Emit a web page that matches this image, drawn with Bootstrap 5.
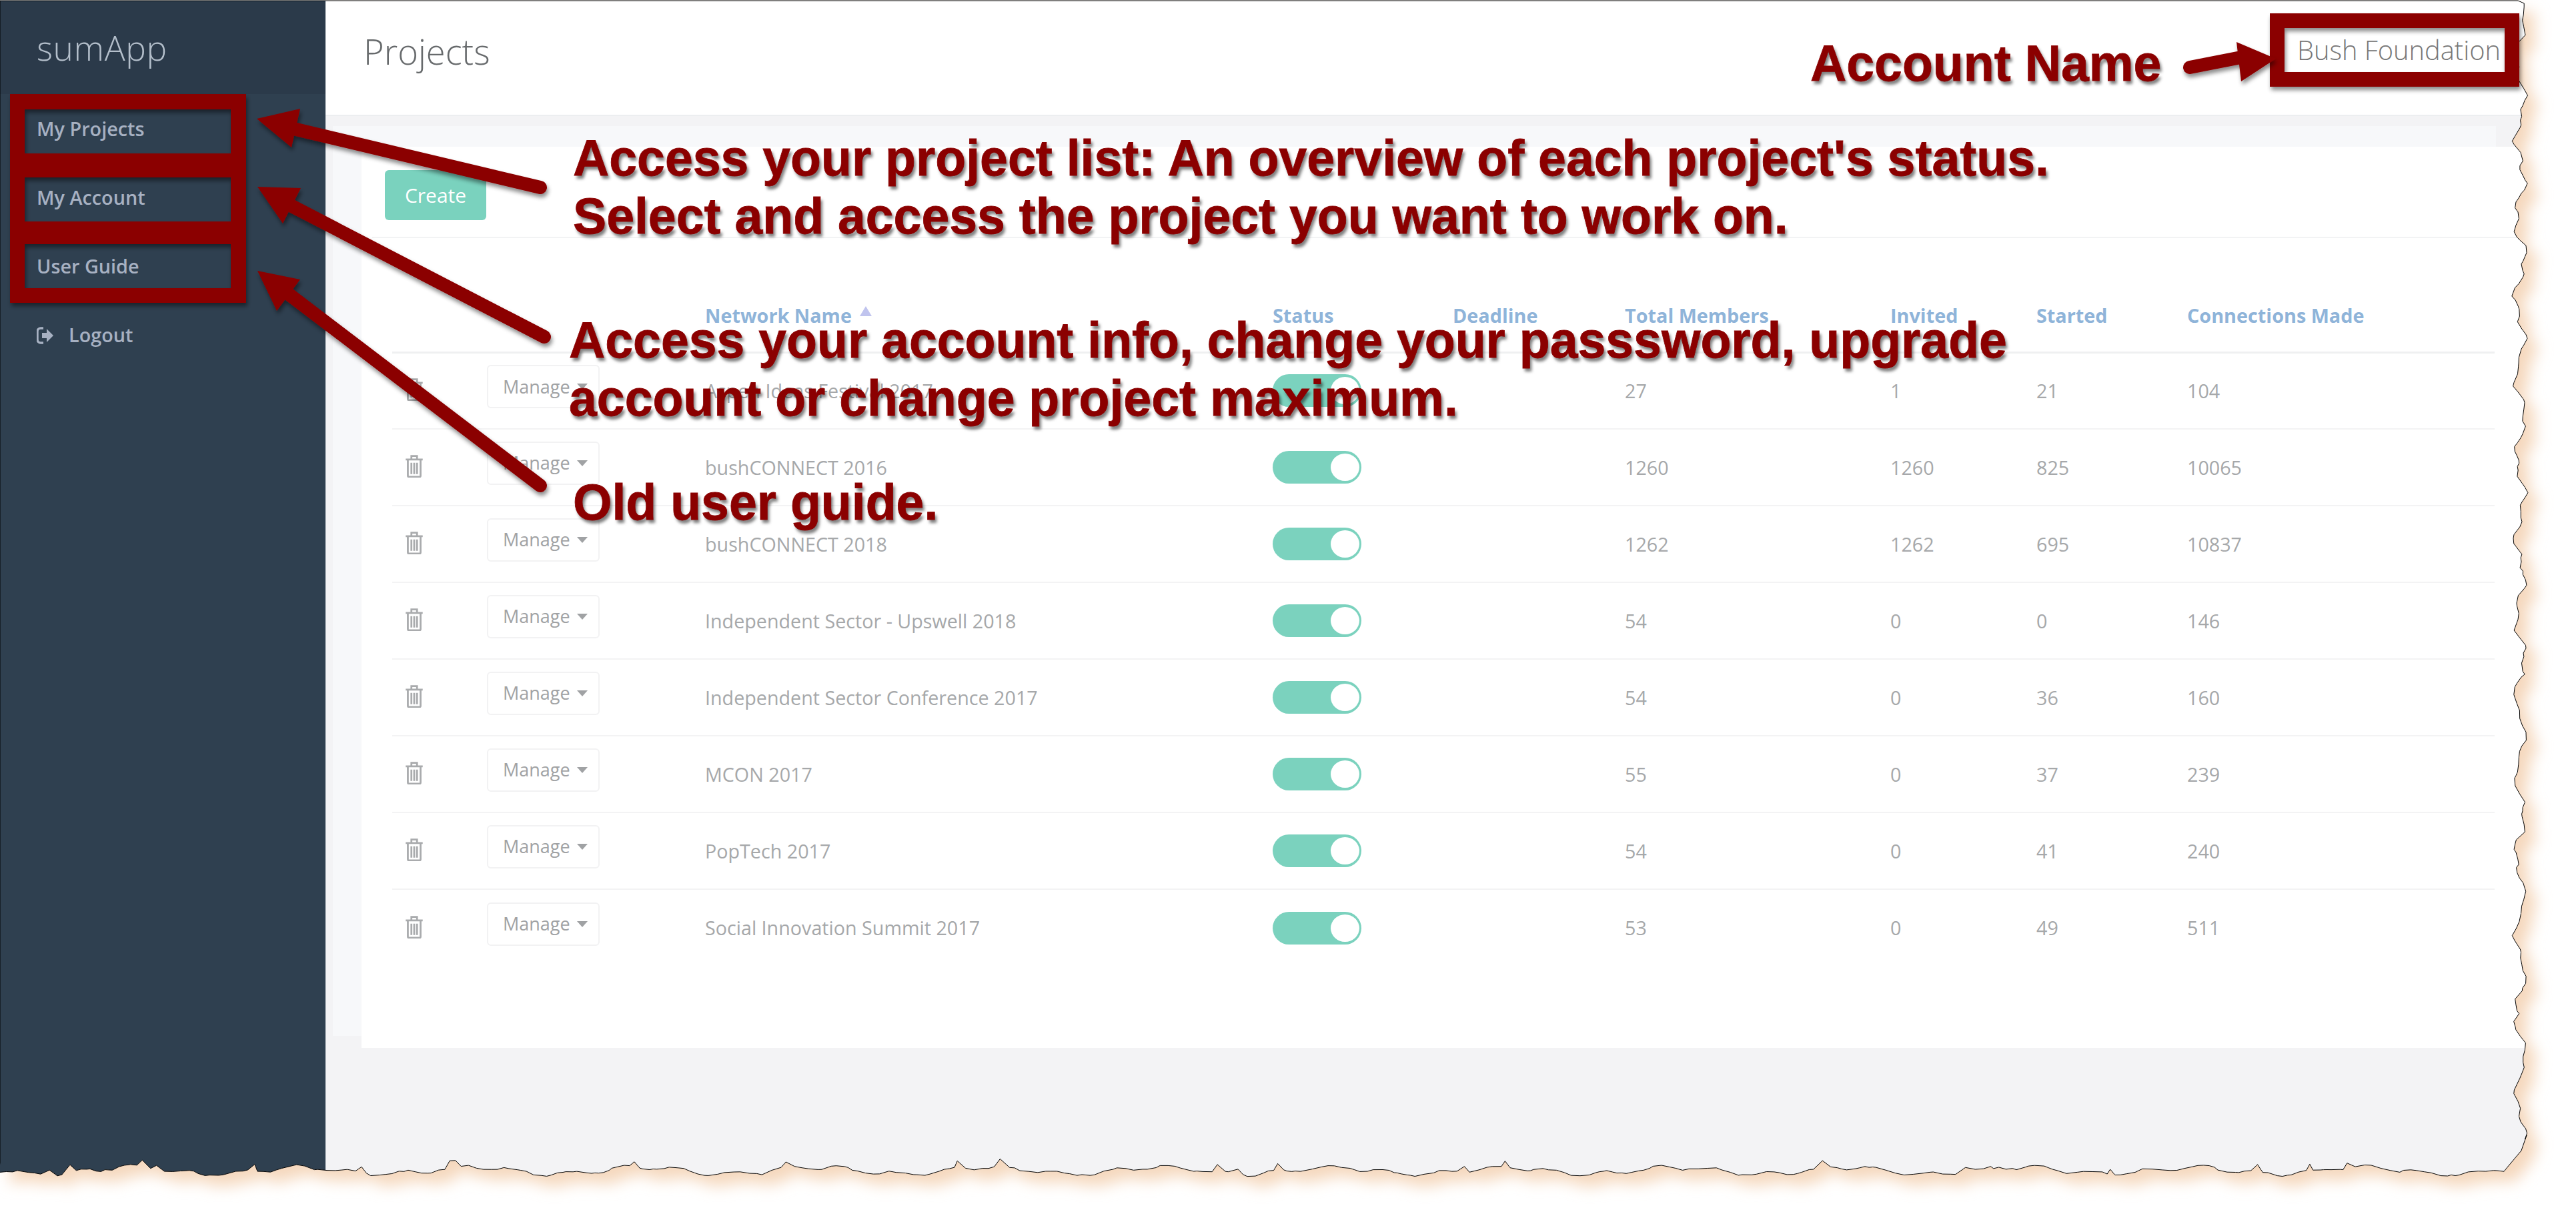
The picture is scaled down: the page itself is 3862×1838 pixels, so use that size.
<!DOCTYPE html>
<html lang="en">
<head>
<meta charset="utf-8">
<title>sumApp Projects</title>
<link href="https://cdn.jsdelivr.net/npm/bootstrap@5.3.0/dist/css/bootstrap.min.css" rel="stylesheet">
<style>
html,body{margin:0;width:3862px;height:1838px;overflow:hidden;background:#fff;font-family:"Open Sans",sans-serif}
.page-stage{position:relative;width:3862px;height:1838px}
.app-shell{width:3800px;height:1780px;padding-top:1px;background:#f3f3f5;overflow:hidden}
.side-rail{width:488px;background:#2f4050}
.brand-box{height:140px;padding:2px 0 0 55px;background:#2b3a4a;color:#b4bfcb;font-size:51.5px;font-weight:300;letter-spacing:.6px}
.rail-link{display:block;height:103px;line-height:103px;padding:0 0 0 55px;color:#a7b1c2;font-size:28.8px;font-weight:600;text-decoration:none}
.rail-list{padding-top:0}
.rail-link svg{width:26px;height:28px;margin-right:22px;vertical-align:-4px}
.top-bar{height:173px;background:#fff;border-bottom:2px solid #eceef0;padding:0 51px 21px 57px}
.page-name{font-size:52.5px;font-weight:300;color:#676a6c;margin:0;line-height:1.2}
.acct-name{font-size:39.8px;font-weight:300;color:#777;margin-top:-3px}
.under-band{margin:15px 0 0 11px;width:3243px;height:1364px;background:#f7f8fa}
.sheet-card{margin:31px -70px 0 43px;height:1351px;width:3300px;background:#fff}
.tool-row{height:137px;margin-left:16px;padding:35px 0 0 19px;border-bottom:2px solid #f2f3f4}
.make-btn{width:152px;height:75px;padding:0;background:#7ad2be;border:0;border-radius:6px;color:#fff;font-size:30px;font-weight:400}
.grid-wrap{margin-left:46px;width:3152px}
.net-table{table-layout:fixed;width:3152px;margin:0;--bs-table-bg:transparent;color:#a6a8aa;font-size:28.7px;font-weight:400}
.net-table th{height:171px;padding:0 0 35px;vertical-align:bottom;color:#8fb4d9;font-weight:700;font-size:28.8px;border-bottom:3px solid #eff0f1;line-height:38px}
.net-table td{height:115px;padding:0;vertical-align:middle;border-bottom:2px solid #f3f3f4;color:#a6a8aa}
.net-table tr:last-child td{border-bottom:0}
.bin-col{width:142px}.act-col{width:327px}.name-col{width:851px}.stat-col{width:270px}.due-col{width:258px}.tot-col{width:398px}.inv-col{width:219px}.sta-col{width:226px}
.bin-ico{display:block;width:28px;height:35px;margin:-4px 0 0 19px}
.manage-btn{width:169px;height:65px;padding:0 0 0 22px;margin-bottom:12px;text-align:left;background:#fff;border:2px solid #f2f2f3;border-radius:6px;color:#a0a2a4;font-size:27px;display:flex;align-items:center}
.down-tri{display:inline-block;width:0;height:0;margin-left:10px;border-left:8px solid transparent;border-right:8px solid transparent;border-top:9px solid #a0a2a4}
.up-tri{display:inline-block;width:0;height:0;margin-left:12px;vertical-align:10px;border-left:9px solid transparent;border-right:9px solid transparent;border-bottom:15px solid #c0c4ee}
.sw-track{display:flex;justify-content:flex-end;align-items:center;width:133px;height:49px;padding-right:3px;border-radius:25px;background:#7bd2be}
.sw-knob{width:43px;height:41px;border-radius:50%;background:#fff}
.torn-layer,.mark-layer{position:absolute;left:0;top:0;width:3862px;height:1838px;pointer-events:none}
.note-text{position:absolute;margin:0;font-family:"Liberation Sans",Arial,sans-serif;font-weight:700;font-size:75.2px;line-height:87px;color:#8b0000;white-space:nowrap;-webkit-text-stroke:.8px #8b0000;text-shadow:3px 5px 4px rgba(0,0,0,.5)}
.note-a{left:859px;top:194px}
.note-b{left:853px;top:467px}
.note-c{left:859px;top:710px}
.note-d{left:2714px;top:52px}
</style>
</head>
<body>
<div class="page-stage">
  <div class="app-shell d-flex">
    <aside class="side-rail flex-shrink-0">
      <div class="brand-box d-flex align-items-center">sumApp</div>
      <ul class="nav flex-column rail-list">
        <li class="nav-item"><a class="rail-link" href="#">My Projects</a></li>
        <li class="nav-item"><a class="rail-link" href="#">My Account</a></li>
        <li class="nav-item"><a class="rail-link" href="#">User Guide</a></li>
        <li class="nav-item"><a class="rail-link" href="#"><svg viewBox="0 0 26 28"><path d="M10 3H6a5 5 0 0 0-5 5v12a5 5 0 0 0 5 5h4" fill="none" stroke="#a7b1c2" stroke-width="3.5"/><path d="M8 10h7V4l10 10-10 10v-6H8z" fill="#a7b1c2"/></svg>Logout</a></li>
      </ul>
    </aside>
    <main class="flex-grow-1 d-flex flex-column">
      <header class="top-bar d-flex justify-content-between align-items-center">
        <h1 class="page-name">Projects</h1>
        <div class="acct-name">Bush Foundation</div>
      </header>
      <div class="under-band flex-shrink-0">
        <section class="sheet-card">
          <div class="tool-row"><button class="btn make-btn" type="button">Create</button></div>
          <div class="grid-wrap">
            <table class="table net-table">
              <colgroup><col class="bin-col"><col class="act-col"><col class="name-col"><col class="stat-col"><col class="due-col"><col class="tot-col"><col class="inv-col"><col class="sta-col"><col></colgroup>
              <thead><tr><th></th><th></th><th>Network Name<span class="up-tri"></span></th><th>Status</th><th>Deadline</th><th>Total Members</th><th>Invited</th><th>Started</th><th>Connections Made</th></tr></thead>
              <tbody id="rows">
              </tbody>
            </table>
          </div>
        </section>
      </div>
    </main>
  </div>

  <svg class="torn-layer" viewBox="0 0 3862 1838">
    <defs>
      <filter id="soft" x="-5%" y="-5%" width="110%" height="110%"><feGaussianBlur stdDeviation="11"/></filter>
      <clipPath id="outside"><path id="outClip" clip-rule="evenodd" d=""/></clipPath>
    </defs>
    <path id="outWhite" fill="#fff" fill-rule="evenodd" d=""/>
    <g clip-path="url(#outside)"><path id="tornShade" fill="#f5d8bd" filter="url(#soft)" d=""/></g>
    <path id="tornLine" fill="none" stroke="#000" stroke-width="1" d=""/>
  </svg>

  <svg class="mark-layer" viewBox="0 0 3862 1838">
    <defs><filter id="dropish" x="-10%" y="-10%" width="120%" height="125%"><feDropShadow dx="2" dy="5" stdDeviation="3" flood-color="#000" flood-opacity=".45"/></filter></defs>
    <g fill="#8b0000" stroke="none" filter="url(#dropish)">
      <path fill-rule="evenodd" d="M15 141H369V454H15ZM37 164V230H346V164ZM37 266V332H346V266ZM37 366V432H346V366Z"/>
      <path fill-rule="evenodd" d="M3403 20H3777V130H3403ZM3425 42V108H3755V42Z"/>
    </g>
    <g filter="url(#dropish)">
      <g stroke="#8b0000" stroke-width="20" stroke-linecap="round" fill="none">
        <line x1="440" y1="193" x2="810" y2="281"/>
        <line x1="430" y1="305" x2="816" y2="505"/>
        <line x1="425" y1="435" x2="810" y2="728"/>
        <line x1="3283" y1="101" x2="3370" y2="84"/>
      </g>
      <g fill="#8b0000">
        <path d="M385 178 450 163 437 221Z"/>
        <path d="M386 280 451 282 424 335Z"/>
        <path d="M386 406 450 419 415 466Z"/>
        <path d="M3412 88 3353 63 3360 122Z"/>
      </g>
    </g>
  </svg>

  <p class="note-text note-a">Access your project list: An overview of each project's status.<br>Select and access the project you want to work on.</p>
  <p class="note-text note-b">Access your account info, change your passsword, upgrade<br>account or change project maximum.</p>
  <p class="note-text note-c">Old user guide.</p>
  <p class="note-text note-d">Account Name</p>
</div>
<script src="https://cdn.jsdelivr.net/npm/bootstrap@5.3.0/dist/js/bootstrap.bundle.min.js"></script>
<script>
const data=[["Aspen Ideas Festival 2017",27,1,21,104],["bushCONNECT 2016",1260,1260,825,10065],["bushCONNECT 2018",1262,1262,695,10837],["Independent Sector - Upswell 2018",54,0,0,146],["Independent Sector Conference 2017",54,0,36,160],["MCON 2017",55,0,37,239],["PopTech 2017",54,0,41,240],["Social Innovation Summit 2017",53,0,49,511]];
const bin='<svg class="bin-ico" viewBox="0 0 26 33"><path d="M1 7.5h24M9 7V2.5h8V7M4 8v22.5a1.5 1.5 0 0 0 1.5 1.5h15a1.5 1.5 0 0 0 1.5-1.5V8M9 12v16M13 12v16M17 12v16" fill="none" stroke="#a9abad" stroke-width="2.6"/></svg>';
document.getElementById('rows').innerHTML=data.map(r=>`<tr><td>${bin}</td><td><button class="btn manage-btn" type="button">Manage<span class="down-tri"></span></button></td><td>${r[0]}</td><td><div class="sw-track"><div class="sw-knob"></div></div></td><td></td><td>${r[1]}</td><td>${r[2]}</td><td>${r[3]}</td><td>${r[4]}</td></tr>`).join('');
let seed=73;const rnd=()=>{seed=(seed*16807)%2147483647;return seed/2147483647};
const pts=[[0,1],[3775,1]];
let y=1,base=3778;
while(y<1700){y+=4+rnd()*9;let t=Math.sin(y/19)*7+Math.sin(y/7.3+1)*4+(rnd()-.5)*4;pts.push([+(base+t).toFixed(1),+y.toFixed(1)])}
pts.push([3788,1702],[3780,1725],[3759,1750]);
let x=3759;
while(x>8){x-=4+rnd()*11;let t=Math.sin(x/41)*5+Math.sin(x/13+2)*3+(rnd()-.5)*3;if(rnd()<.04)t-=9;pts.push([+x.toFixed(1),+(1755+t).toFixed(1)])}
pts.push([0,1743]);
const d='M'+pts.map(p=>p.join(' ')).join('L')+'Z';
const o='M0 0H3862V1838H0Z'+d;
outWhite.setAttribute('d',o);outClip.setAttribute('d',o);tornLine.setAttribute('d',d);
tornShade.setAttribute('d',d);tornShade.setAttribute('transform','translate(16 16)');
</script>
</body>
</html>
